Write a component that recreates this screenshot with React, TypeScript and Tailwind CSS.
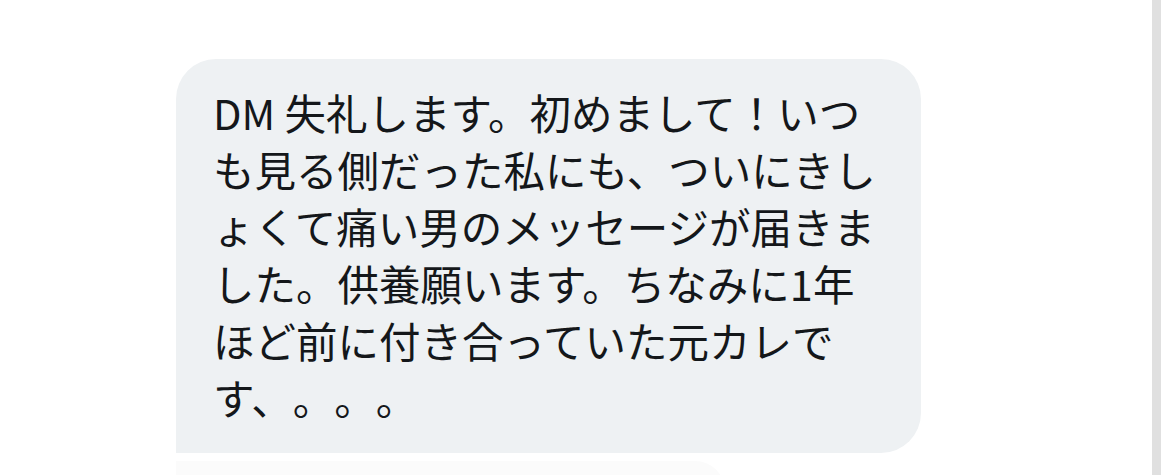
import React from 'react';

const lines = [
  'DM 失礼します。初めまして！いつ',
  'も見る側だった私にも、ついにきし',
  'ょくて痛い男のメッセージが届きま',
  'した。供養願います。ちなみに1年',
  'ほど前に付き合っていた元カレで',
  'す、。。。',
];

const App: React.FC = () => {
  return (
    <div className="h-[475px] w-[1170px] overflow-hidden bg-white flex" style={{ fontFamily: '"Noto Sans CJK JP", "Noto Sans", sans-serif' }}>
      <main className="flex-1 pl-[176px] pt-[59px]">
        <div className="w-[745px] bg-[#eef1f3] rounded-tl-[40px] rounded-tr-[40px] rounded-br-[40px] pl-[37px] pt-[25px] pb-[27px] text-[#14171a] text-[41.5px] leading-[57px] [text-spacing-trim:space-all]">
          {lines.map((l, i) => (
            <div key={i} className="whitespace-nowrap">{l}</div>
          ))}
        </div>
        <div className="mt-[8px] w-[549px] h-[60px] bg-[#fbfbfb] rounded-tr-[30px]"></div>
      </main>
      <div className="w-[9px] h-full bg-[#e0e0e0] mr-[9px]"></div>
    </div>
  );
};

export default App;
